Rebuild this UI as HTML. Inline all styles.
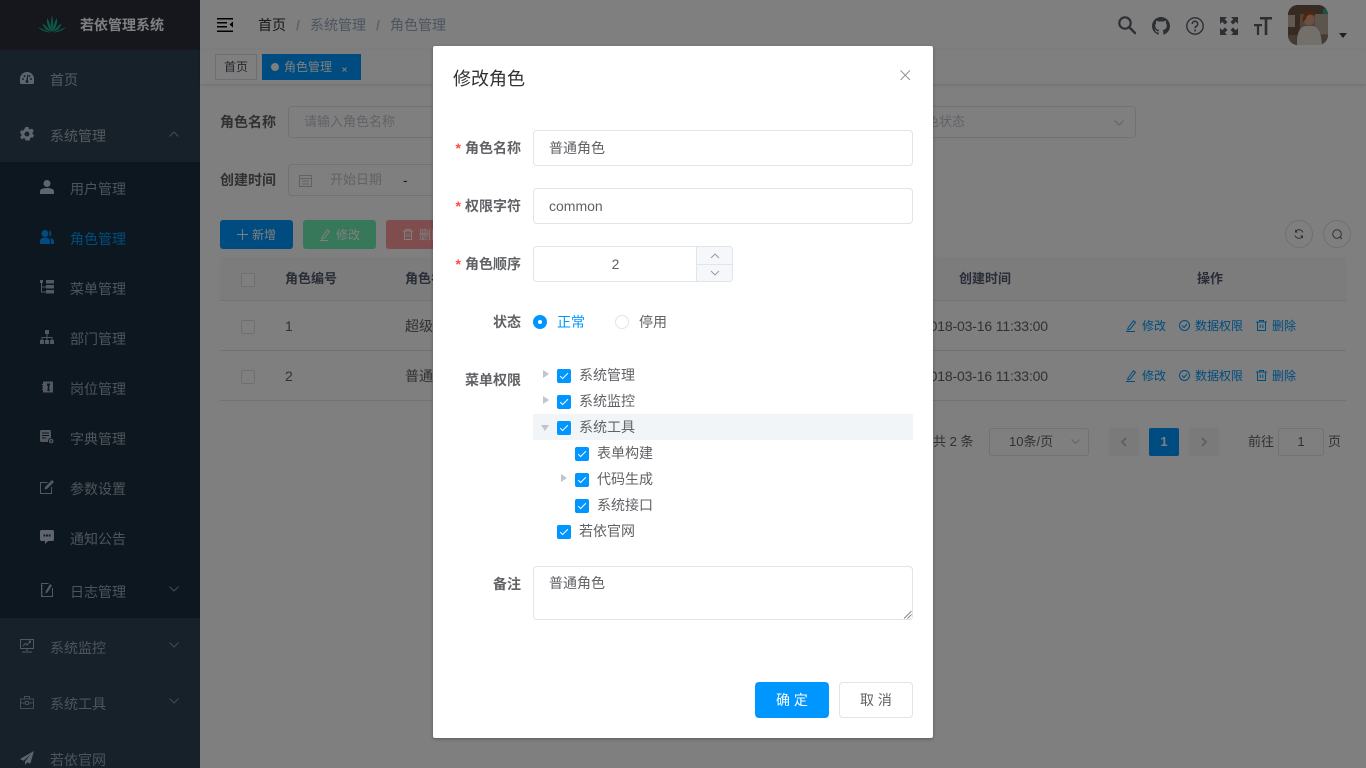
<!DOCTYPE html>
<html lang="zh"><head><meta charset="utf-8"><title>角色管理</title>
<style>
*{box-sizing:border-box}
html,body{margin:0;padding:0;width:1366px;height:768px;overflow:hidden;background:#fff}
body{font-family:"Liberation Sans","Noto Sans CJK SC",sans-serif;font-size:14px;color:#606266;position:relative}
.a{position:absolute}
.t{position:absolute;white-space:nowrap;line-height:20px;height:20px}
.b{font-weight:700}
.side{color:#aab4bf}
.sub{color:#9aa8b5}
.box{position:absolute;border:1px solid #dfe4ed;border-radius:4px;background:#fff}
.cb{position:absolute;width:14px;height:14px;border:1px solid #dcdfe6;border-radius:2px;background:#fff}
.ck{position:absolute;width:14px;height:14px;border-radius:2px;background:#0096ff}
.ck:after{content:"";position:absolute;left:4.5px;top:1.5px;width:3px;height:7px;border:1px solid #fff;border-left:0;border-top:0;transform:rotate(45deg)}
.car{position:absolute;width:0;height:0;border-left:6px solid #c0c4cc;border-top:4px solid transparent;border-bottom:4px solid transparent}
svg{position:absolute;overflow:visible}
.lb{position:absolute;right:845px;white-space:nowrap;font-weight:700;line-height:20px;height:20px;color:#606266}
.lb i{font-style:normal;color:#ff4949;margin-right:4px}
.op{font-size:12px;color:#0096ff}
.line{position:absolute;left:220px;width:1126px;height:1px;background:#dfe6ec}
.date{font-size:14px;letter-spacing:-.16px}
</style></head><body>

<!-- sidebar -->
<div class="a" style="left:0;top:0;width:200px;height:768px;background:#2d4354"></div>
<div class="a" style="left:0;top:0;width:200px;height:50px;background:#2b2f3a"></div>
<div class="a" style="left:0;top:162px;width:200px;height:456px;background:#1b2e3e"></div>
<svg style="left:38px;top:15px" width="28" height="18" viewBox="0 0 28 18"><g fill="#1ab394"><path d="M14 17C12.500 11 13 5 14 0c1 5 1.500 11 0 17z"/><path d="M13.500 17C10 13 8.500 8 9 3c2.500 4 4.500 9 4.500 14z"/><path d="M14.500 17C18 13 19.500 8 19 3c-2.500 4-4.500 9-4.500 14z"/><path d="M13 17C10 13 7 10 4.500 8.500c1 4 4 7 8.500 8.500z"/><path d="M15 17c3-4 6-7 8.500-8.500-1 4-4 7-8.500 8.500z"/><path d="M12.500 17.500C8 16 3 13 0 12.500c4 3 8 5 12.500 5z"/><path d="M15.500 17.500C20 16 25 13 28 12.500c-4 3-8 5-12.500 5z"/></g></svg>
<div class="t b" style="left:80px;top:15px;color:#fff">若依管理系统</div>

<svg style="left:20px;top:72px" width="14" height="13" viewBox="0 0 14 13"><path fill="#bfcbd9" fill-rule="evenodd" d="M7 0a7 7 0 0 1 7 7v3.500a1.500 1.500 0 0 1-1.500 1.500h-11A1.500 1.500 0 0 1 0 10.500V7a7 7 0 0 1 7-7zM3 6a1 1 0 1 0 0 2 1 1 0 0 0 0-2zm1.500-3a1 1 0 1 0 0 2 1 1 0 0 0 0-2zm5 0a1 1 0 1 0 0 2 1 1 0 0 0 0-2zM11 6a1 1 0 1 0 0 2 1 1 0 0 0 0-2zM7.300 2.500l-.9 5.600a1.500 1.500 0 1 0 1.500.1l.2-5.700z"/></svg>
<div class="t side" style="left:50px;top:70px">首页</div>

<svg style="left:20px;top:127px" width="14" height="14" viewBox="0 0 14 14"><path fill="#bfcbd9" fill-rule="evenodd" d="M5.500 0h3l.4 1.900 1.400.6L12 1.500 13.900 4l-1.400 1.400.1 1.600 1.400 1-1.100 2.700-1.900-.3-1.100 1.100.1 2H5.500l-.4-1.900-1.400-.6L2 12.500.1 10l1.400-1.400L1.400 7 0 6l1.100-2.700 1.900.3 1.100-1.100L5.500 0zM7 4.500a2.500 2.500 0 1 0 0 5 2.500 2.500 0 0 0 0-5z"/></svg>
<div class="t side" style="left:50px;top:126px">系统管理</div>
<svg style="left:169px;top:131px" width="10" height="6" viewBox="0 0 10 6"><path fill="none" stroke="#8a96a4" d="M.5 5.500 5 1l4.500 4.500"/></svg>

<svg style="left:40px;top:180px" width="14" height="14" viewBox="0 0 14 14"><circle cx="7" cy="3.500" r="3.500" fill="#bfcbd9"/><path fill="#bfcbd9" d="M0 14v-2.500C0 9 3 8 7 8s7 1 7 3.500V14z"/></svg>
<div class="t sub" style="left:70px;top:179px">用户管理</div>

<svg style="left:40px;top:230px" width="14" height="14" viewBox="0 0 14 14"><g fill="#0096ff"><circle cx="5" cy="3.500" r="3.500"/><path d="M0 14v-3c0-2 2-3.500 5-3.500s5 1.500 5 3.500v3z"/><path d="M9 .5a3.200 3.200 0 0 1 0 6.200c.8-1.800.8-4.400 0-6.200zM10 8c2.500.3 4 1.500 4 3.500V14h-3v-3c0-1.300-.4-2.200-1-3z"/></g></svg>
<div class="t" style="left:70px;top:229px;color:#0096ff">角色管理</div>

<svg style="left:40px;top:280px" width="14" height="14" viewBox="0 0 14 14"><g fill="#a5b1bd"><rect x="0" y="0" width="3" height="3"/><rect x="6" y="0" width="8" height="3.500"/><rect x="6" y="5" width="8" height="3.500"/><rect x="6" y="10" width="8" height="3.500"/></g><path fill="none" stroke="#a5b1bd" d="M1.500 3v9h4.500M1.500 7H6"/></svg>
<div class="t sub" style="left:70px;top:279px">菜单管理</div>

<svg style="left:40px;top:330px" width="14" height="14" viewBox="0 0 14 14"><g fill="#a5b1bd"><rect x="5" y="0" width="4" height="4"/><rect x="0" y="10" width="4" height="4"/><rect x="5" y="10" width="4" height="4"/><rect x="10" y="10" width="4" height="4"/></g><path fill="none" stroke="#a5b1bd" d="M7 4v6M2 10V7.500h10V10"/></svg>
<div class="t sub" style="left:70px;top:329px">部门管理</div>

<svg style="left:41px;top:380px" width="12" height="14" viewBox="0 0 12 14"><path fill="#a5b1bd" fill-rule="evenodd" d="M2 1.500h10V12.500H2V10H1V9h1V7.500H1v-1h1V5H1V4h1zM6 3.500v2l.8.5v3L6 10l1.500 1.500L9 10l-.7-1V6L9 5.500v-2z"/></svg>
<div class="t sub" style="left:70px;top:379px">岗位管理</div>

<svg style="left:40px;top:430px" width="14" height="14" viewBox="0 0 14 14"><path fill="#a5b1bd" fill-rule="evenodd" d="M0 1.500C0 .7.700 0 1.500 0h8C10.300 0 11 .7 11 1.500V8a3 3 0 0 0-2.900 4H1.500C.7 12 0 11.300 0 10.500zM2 2.500v1h7v-1zM2 5v1h7V5zM2 7.500v1h4v-1z"/><circle cx="11.200" cy="11" r="2.300" fill="#a5b1bd"/><circle cx="11.200" cy="11" r=".9" fill="#1b2e3e"/></svg>
<div class="t sub" style="left:70px;top:429px">字典管理</div>

<svg style="left:40px;top:480px" width="14" height="14" viewBox="0 0 14 14"><path fill="none" stroke="#a5b1bd" d="M11.500 7v6.500H.5V2.500h7"/><path fill="#a5b1bd" d="M12 0l2 2-7 7-2.500.5L5 7z"/></svg>
<div class="t sub" style="left:70px;top:479px">参数设置</div>

<svg style="left:40px;top:530px" width="14" height="14" viewBox="0 0 14 14"><path fill="#bfcbd9" fill-rule="evenodd" d="M1.500 0h11C13.300 0 14 .7 14 1.500v8c0 .8-.7 1.500-1.500 1.500H8l-3 3v-3H1.500C.7 11 0 10.300 0 9.500v-8C0 .7.700 0 1.500 0zM3.500 4.500v2h1.800v-2zM6.100 4.500v2h1.800v-2zM8.700 4.500v2h1.800v-2z"/></svg>
<div class="t sub" style="left:70px;top:529px">通知公告</div>

<svg style="left:41px;top:583px" width="12" height="14" viewBox="0 0 12 14"><path fill="none" stroke="#a5b1bd" d="M11.500 5v8.500H.5V.5h7M.5 3h1.500M.5 6h1.500M.5 9h1.500M.5 12h1.500"/><path fill="#a5b1bd" d="M9 1l2 1.500-4.500 7-2 1 .3-2.300z"/></svg>
<div class="t sub" style="left:70px;top:582px">日志管理</div>
<svg style="left:169px;top:586px" width="10" height="6" viewBox="0 0 10 6"><path fill="none" stroke="#8a96a4" d="M.5.5 5 5 9.500.5"/></svg>

<svg style="left:20px;top:639px" width="14" height="14" viewBox="0 0 14 14"><path fill="none" stroke="#a5b1bd" d="M.5.500h13v9H.5zM7 9.500V12M2 13h10M3 7l2.500-2.500L7 6l3.500-4M8.500 2H10.500V4"/></svg>
<div class="t sub" style="left:50px;top:638px">系统监控</div>
<svg style="left:169px;top:642px" width="10" height="6" viewBox="0 0 10 6"><path fill="none" stroke="#8a96a4" d="M.5.5 5 5 9.500.5"/></svg>

<svg style="left:20px;top:696px" width="14" height="13" viewBox="0 0 14 13"><path fill="none" stroke="#8a96a4" d="M.5 3h13v9.500H.5zM4.500 3V.5h5V3M.5 7h5M8.500 7h5M5.500 5.500h3v3h-3z"/></svg>
<div class="t sub" style="left:50px;top:694px">系统工具</div>
<svg style="left:169px;top:698px" width="10" height="6" viewBox="0 0 10 6"><path fill="none" stroke="#8a96a4" d="M.5.5 5 5 9.500.5"/></svg>

<svg style="left:20px;top:751px" width="14" height="14" viewBox="0 0 14 14"><path fill="#bfcbd9" d="M14 0 0 8l3.500 1.800L11 3 5 10.500V14l2.200-2.700 3 1.500z"/></svg>
<div class="t sub" style="left:50px;top:750px">若依官网</div>

<!-- header -->
<div class="a" style="left:200px;top:50px;width:1166px;height:1px;background:#ececec"></div>
<svg style="left:217px;top:18px" width="16" height="14" viewBox="0 0 16 14"><g fill="#000"><rect width="16" height="1.500"/><rect y="4" width="10" height="1.500"/><rect y="8" width="10" height="1.500"/><rect y="12.500" width="16" height="1.500"/><path d="M16 3.500v6l-3.500-3z"/></g></svg>
<div class="t" style="left:258px;top:15px;color:#303133">首页</div>
<div class="t b" style="left:296px;top:15px;color:#c0c4cc">/</div>
<div class="t" style="left:310px;top:15px;color:#97a8be">系统管理</div>
<div class="t b" style="left:376px;top:15px;color:#c0c4cc">/</div>
<div class="t" style="left:390px;top:15px;color:#97a8be">角色管理</div>

<svg style="left:1118px;top:16px" width="18" height="18" viewBox="0 0 18 18"><circle cx="7" cy="7" r="5.700" fill="none" stroke="#5a5e66" stroke-width="2.200"/><path d="M11.500 11.500 17 17" stroke="#5a5e66" stroke-width="2.400" stroke-linecap="round"/></svg>
<svg style="left:1152px;top:17px" width="18" height="18" viewBox="0 0 16 16"><path fill="#5a5e66" d="M8 0C3.580 0 0 3.580 0 8c0 3.540 2.290 6.530 5.470 7.590.4.070.55-.17.55-.38 0-.19-.01-.82-.01-1.490-2.010.37-2.530-.49-2.690-.94-.09-.23-.48-.94-.82-1.130-.28-.15-.68-.52-.01-.53.63-.01 1.080.58 1.230.82.720 1.210 1.870.87 2.330.66.070-.52.280-.87.510-1.070-1.780-.2-3.640-.89-3.640-3.950 0-.87.310-1.590.820-2.150-.08-.2-.36-1.020.08-2.120 0 0 .67-.21 2.200.82.640-.18 1.320-.27 2-.27s1.360.09 2 .27c1.530-1.040 2.200-.82 2.200-.82.440 1.100.160 1.920.08 2.120.51.560.82 1.270.82 2.150 0 3.070-1.870 3.750-3.650 3.950.29.250.54.730.54 1.480 0 1.070-.01 1.930-.01 2.200 0 .21.150.46.550.38A8.010 8.010 0 0 0 16 8c0-4.420-3.580-8-8-8z"/></svg>
<svg style="left:1186px;top:17px" width="18" height="18" viewBox="0 0 18 18"><circle cx="9" cy="9" r="8.200" fill="none" stroke="#5a5e66" stroke-width="1.400"/><path d="M6.300 7a2.700 2.700 0 1 1 4 2.300C9.400 9.800 9 10.300 9 11.300" fill="none" stroke="#5a5e66" stroke-width="1.500"/><circle cx="9" cy="13.500" r="1" fill="#5a5e66"/></svg>
<svg style="left:1220px;top:17px" width="18" height="18" viewBox="0 0 18 18"><g fill="#5a5e66"><path d="M0 0h7L4.800 2.200 7.500 5 5 7.500 2.200 4.800 0 7zM18 0v7l-2.200-2.200L13 7.500 10.500 5l2.700-2.800L11 0zM0 18v-7l2.200 2.200L5 10.500 7.500 13l-2.700 2.800L7 18zM18 18h-7l2.200-2.200-2.700-2.800 2.500-2.500 2.800 2.700L18 11z"/></g></svg>
<svg style="left:1254px;top:17px" width="18" height="18" viewBox="0 0 18 18"><g fill="#5a5e66"><path d="M6 0h12v2.500h-4.700V18h-2.600V2.500H6z"/><path d="M0 7h8v2.200H5.100V18H2.900V9.200H0z"/></g></svg>
<svg style="left:1288px;top:5px" width="40" height="40" viewBox="0 0 40 40"><defs><clipPath id="av"><rect width="40" height="40" rx="10"/></clipPath></defs><g clip-path="url(#av)"><rect width="40" height="40" fill="#a08672"/><rect width="40" height="9" fill="#6b5646"/><rect x="0" y="0" width="12" height="40" fill="#6e5444"/><rect x="0" y="10" width="7" height="12" fill="#c4b4a0"/><rect x="27" y="9" width="13" height="20" fill="#b7ab9a"/><rect x="35" y="4" width="5" height="5" fill="#2ea8a0"/><rect x="0" y="30" width="40" height="10" fill="#8a7666"/><path d="M9 40c0-10 1-17 8-19h8c7 2 8 9 9 19z" fill="#e6e1d8"/><circle cx="21" cy="15" r="5.500" fill="#d9a184"/><path d="M15 17c-1-8 3-12 8-11 3 .5 4 3 4 5-3-2-6-2-8 0-1 2-2 5-4 6z" fill="#a04a1c"/></g></svg>
<div class="a" style="left:1339px;top:33px;width:0;height:0;border-left:4px solid transparent;border-right:4px solid transparent;border-top:5px solid #304156"></div>

<!-- tags -->
<div class="a" style="left:200px;top:50px;width:1166px;height:34px;background:#fff;box-shadow:0 1px 3px 0 rgba(0,0,0,.12),0 0 3px 0 rgba(0,0,0,.04)"></div>
<div class="a" style="left:215px;top:54px;width:42px;height:26px;border:1px solid #d8dce5;background:#fff"></div>
<div class="t" style="left:224px;top:57px;font-size:12px;color:#495060">首页</div>
<div class="a" style="left:262px;top:54px;width:99px;height:26px;background:#0096ff"></div>
<div class="a" style="left:271px;top:63px;width:8px;height:8px;border-radius:50%;background:#fff"></div>
<div class="t" style="left:284px;top:57px;font-size:12px;color:#fff">角色管理</div>
<svg style="left:342px;top:67px" width="5" height="5" viewBox="0 0 5 5"><path d="M.5.5l4 4M4.500.5l-4 4" stroke="#fff" stroke-width=".9"/></svg>

<!-- search -->
<div class="t b" style="left:220px;top:112px">角色名称</div>
<div class="box" style="left:288px;top:106px;width:240px;height:32px"></div>
<div class="t" style="left:304px;top:112px;color:#c0c4cc;font-size:13px">请输入角色名称</div>
<div class="box" style="left:896px;top:106px;width:240px;height:32px"></div>
<div class="t" style="left:913px;top:112px;color:#c0c4cc;font-size:13px">角色状态</div>
<svg style="left:1114px;top:120px" width="10" height="6" viewBox="0 0 10 6"><path fill="none" stroke="#c0c4cc" d="M.5.5 5 5 9.500.5"/></svg>
<div class="t b" style="left:220px;top:170px">创建时间</div>
<div class="box" style="left:288px;top:164px;width:240px;height:32px"></div>
<svg style="left:299px;top:174px" width="13" height="13" viewBox="0 0 13 13"><path fill="none" stroke="#c0c4cc" d="M.5 1.500h12v11H.5zM.5 4.500h12M3 7h7M3 10h7"/></svg>
<div class="t" style="left:330px;top:170px;color:#c0c4cc;font-size:13px">开始日期</div>
<div class="t" style="left:403px;top:170px;color:#303133">-</div>

<!-- toolbar -->
<div class="a" style="left:220px;top:220px;width:73px;height:29px;background:#0096ff;border-radius:3px"></div>
<svg style="left:237px;top:229px" width="11" height="11" viewBox="0 0 11 11"><path d="M5.500 0v11M0 5.500h11" stroke="#fff"/></svg>
<div class="t" style="left:252px;top:225px;font-size:12px;color:#fff">新增</div>
<div class="a" style="left:303px;top:220px;width:73px;height:29px;background:#6ef0b4;border-radius:3px"></div>
<svg style="left:320px;top:229px" width="11" height="12" viewBox="0 0 11 12"><path fill="none" stroke="#fff" d="M2 8 7.500.8l2 1.500-5.500 7-2.300.5zM0 11.500h8"/></svg>
<div class="t" style="left:336px;top:225px;font-size:12px;color:#fff">修改</div>
<div class="a" style="left:386px;top:220px;width:73px;height:29px;background:#ff9a9a;border-radius:3px"></div>
<svg style="left:403px;top:229px" width="10" height="11" viewBox="0 0 10 11"><path fill="none" stroke="#fff" d="M0 2h10M3 2V.5h4V2M1.500 2v8.500h7V2M3.800 4.500v3.500M6.200 4.500v3.500"/></svg>
<div class="t" style="left:419px;top:225px;font-size:12px;color:#fff">删除</div>
<div class="a" style="left:1285px;top:220px;width:28px;height:28px;border:1px solid #dcdfe6;border-radius:50%"></div>
<svg style="left:1294px;top:229px" width="10" height="10" viewBox="0 0 10 10"><path fill="none" stroke="#606266" d="M9 3.500A4.300 4.300 0 0 0 1.500 2.500M1 6.500a4.300 4.300 0 0 0 7.500 1"/><path fill="#606266" d="M1 .5v3h3zM9 9.500v-3H6z"/></svg>
<div class="a" style="left:1323px;top:220px;width:28px;height:28px;border:1px solid #dcdfe6;border-radius:50%"></div>
<svg style="left:1332px;top:229px" width="11" height="11" viewBox="0 0 11 11"><circle cx="5" cy="5" r="4.300" fill="none" stroke="#606266"/><path d="M8 8l2 2" stroke="#606266"/></svg>

<!-- table -->
<div class="a" style="left:220px;top:257px;width:1126px;height:43px;background:#f8f8f9"></div>
<div class="line" style="top:300px"></div>
<div class="line" style="top:350px"></div>
<div class="line" style="top:400px"></div>
<div class="cb" style="left:241px;top:273px"></div>
<div class="cb" style="left:241px;top:320px"></div>
<div class="cb" style="left:241px;top:370px"></div>
<div class="t b" style="left:285px;top:269px;font-size:13px;color:#515a6e">角色编号</div>
<div class="t b" style="left:405px;top:269px;font-size:13px;color:#515a6e">角色名称</div>
<div class="t b" style="left:959px;top:269px;font-size:13px;color:#515a6e">创建时间</div>
<div class="t b" style="left:1197px;top:269px;font-size:13px;color:#515a6e">操作</div>
<div class="t" style="left:285px;top:316px">1</div>
<div class="t" style="left:285px;top:366px">2</div>
<div class="t" style="left:405px;top:316px">超级管理员</div>
<div class="t" style="left:405px;top:366px">普通角色</div>
<div class="t date" style="left:922px;top:316px">2018-03-16 11:33:00</div>
<div class="t date" style="left:922px;top:366px">2018-03-16 11:33:00</div>

<svg style="left:1126px;top:320px" width="11" height="12" viewBox="0 0 11 12"><path fill="none" stroke="#0096ff" d="M2 8 7.500.8l2 1.500-5.500 7-2.300.5zM0 11.500h9"/></svg>
<div class="t op" style="left:1142px;top:316px">修改</div>
<svg style="left:1179px;top:320px" width="11" height="11" viewBox="0 0 11 11"><circle cx="5.500" cy="5.500" r="5" fill="none" stroke="#0096ff"/><path d="M3 5.500l2 2 3-3.500" fill="none" stroke="#0096ff"/></svg>
<div class="t op" style="left:1195px;top:316px">数据权限</div>
<svg style="left:1256px;top:320px" width="11" height="11" viewBox="0 0 11 11"><path fill="none" stroke="#0096ff" d="M0 2h11M3.500 2V.5h4V2M1.500 2v8.500h8V2M4.200 4.500v3.500M6.800 4.500v3.500"/></svg>
<div class="t op" style="left:1272px;top:316px">删除</div>

<svg style="left:1126px;top:370px" width="11" height="12" viewBox="0 0 11 12"><path fill="none" stroke="#0096ff" d="M2 8 7.500.8l2 1.500-5.500 7-2.300.5zM0 11.500h9"/></svg>
<div class="t op" style="left:1142px;top:366px">修改</div>
<svg style="left:1179px;top:370px" width="11" height="11" viewBox="0 0 11 11"><circle cx="5.500" cy="5.500" r="5" fill="none" stroke="#0096ff"/><path d="M3 5.500l2 2 3-3.500" fill="none" stroke="#0096ff"/></svg>
<div class="t op" style="left:1195px;top:366px">数据权限</div>
<svg style="left:1256px;top:370px" width="11" height="11" viewBox="0 0 11 11"><path fill="none" stroke="#0096ff" d="M0 2h11M3.500 2V.5h4V2M1.500 2v8.500h8V2M4.200 4.500v3.500M6.800 4.500v3.500"/></svg>
<div class="t op" style="left:1272px;top:366px">删除</div>

<!-- pagination -->
<div class="t" style="left:933px;top:432px;font-size:13px">共 2 条</div>
<div class="box" style="left:989px;top:428px;width:100px;height:28px;border-radius:3px"></div>
<div class="t" style="left:1009px;top:432px;font-size:13px">10条/页</div>
<svg style="left:1071px;top:439px" width="9" height="5" viewBox="0 0 9 5"><path fill="none" stroke="#c0c4cc" d="M.5.5 4.500 4.500 8.500.5"/></svg>
<div class="a" style="left:1109px;top:428px;width:30px;height:28px;background:#f4f4f5;border-radius:2px"></div>
<svg style="left:1121px;top:437px" width="6" height="10" viewBox="0 0 6 10"><path fill="none" stroke="#c0c4cc" stroke-width="2" d="M5 1 1 5l4 4"/></svg>
<div class="a" style="left:1149px;top:428px;width:30px;height:28px;background:#0096ff;border-radius:2px"></div>
<div class="t b" style="left:1149px;top:432px;width:30px;text-align:center;font-size:13px;color:#fff">1</div>
<div class="a" style="left:1189px;top:428px;width:30px;height:28px;background:#f4f4f5;border-radius:2px"></div>
<svg style="left:1201px;top:437px" width="6" height="10" viewBox="0 0 6 10"><path fill="none" stroke="#c0c4cc" stroke-width="2" d="M1 1l4 4-4 4"/></svg>
<div class="t" style="left:1248px;top:432px;font-size:13px">前往</div>
<div class="box" style="left:1278px;top:428px;width:46px;height:28px;border-radius:3px"></div>
<div class="t" style="left:1278px;top:432px;width:46px;text-align:center;font-size:13px">1</div>
<div class="t" style="left:1328px;top:432px;font-size:13px">页</div>

<!-- overlay -->
<div class="a" style="left:0;top:0;width:1366px;height:768px;background:rgba(0,0,0,.5)"></div>

<!-- dialog -->
<div class="a" style="left:433px;top:46px;width:500px;height:692px;background:#fff;border-radius:2px;box-shadow:0 1px 3px rgba(0,0,0,.3)"></div>
<div class="t" style="left:453px;top:67px;font-size:18px;line-height:24px;height:24px;color:#303133">修改角色</div>
<svg style="left:900px;top:70px" width="10" height="10" viewBox="0 0 10 10"><path d="M.5.5l9.500 9.500M10 .5.500 10" stroke="#909399"/></svg>

<div class="lb" style="top:138px"><i>*</i>角色名称</div>
<div class="box" style="left:533px;top:130px;width:380px;height:36px"></div>
<div class="t" style="left:549px;top:138px">普通角色</div>

<div class="lb" style="top:196px"><i>*</i>权限字符</div>
<div class="box" style="left:533px;top:188px;width:380px;height:36px"></div>
<div class="t" style="left:549px;top:196px">common</div>

<div class="lb" style="top:254px"><i>*</i>角色顺序</div>
<div class="box" style="left:533px;top:246px;width:200px;height:36px"></div>
<div class="a" style="left:696px;top:247px;width:36px;height:34px;background:#f5f7fa;border-left:1px solid #dfe4ed;border-radius:0 3px 3px 0"></div>
<div class="a" style="left:697px;top:264px;width:35px;height:1px;background:#dfe4ed"></div>
<svg style="left:710px;top:253px" width="10" height="6" viewBox="0 0 10 6"><path fill="none" stroke="#909399" stroke-width=".9" d="M1 5l4-4 4 4"/></svg>
<svg style="left:710px;top:270px" width="10" height="6" viewBox="0 0 10 6"><path fill="none" stroke="#909399" stroke-width=".9" d="M1 1l4 4 4-4"/></svg>
<div class="t" style="left:534px;top:254px;width:163px;text-align:center">2</div>

<div class="lb" style="top:312px">状态</div>
<div class="a" style="left:533px;top:316px;width:14px;height:14px;border-radius:50%;background:#0096ff;margin-top:-1px"></div>
<div class="a" style="left:538px;top:320px;width:4px;height:4px;border-radius:50%;background:#fff"></div>
<div class="t" style="left:557px;top:312px;color:#0096ff">正常</div>
<div class="a" style="left:615px;top:315px;width:14px;height:14px;border-radius:50%;border:1px solid #dfe4ed"></div>
<div class="t" style="left:639px;top:312px">停用</div>

<div class="lb" style="top:370px">菜单权限</div>
<div class="a" style="left:533px;top:414px;width:380px;height:26px;background:#f2f5f8"></div>

<div class="car" style="left:543px;top:370px"></div>
<div class="ck" style="left:557px;top:369px"></div>
<div class="t" style="left:579px;top:365px">系统管理</div>
<div class="car" style="left:543px;top:396px"></div>
<div class="ck" style="left:557px;top:395px"></div>
<div class="t" style="left:579px;top:391px">系统监控</div>
<div class="a" style="left:541px;top:425px;width:0;height:0;border-top:6px solid #c0c4cc;border-left:4px solid transparent;border-right:4px solid transparent"></div>
<div class="ck" style="left:557px;top:421px"></div>
<div class="t" style="left:579px;top:417px">系统工具</div>
<div class="ck" style="left:575px;top:447px"></div>
<div class="t" style="left:597px;top:443px">表单构建</div>
<div class="car" style="left:561px;top:474px"></div>
<div class="ck" style="left:575px;top:473px"></div>
<div class="t" style="left:597px;top:469px">代码生成</div>
<div class="ck" style="left:575px;top:499px"></div>
<div class="t" style="left:597px;top:495px">系统接口</div>
<div class="ck" style="left:557px;top:525px"></div>
<div class="t" style="left:579px;top:521px">若依官网</div>

<div class="lb" style="top:574px">备注</div>
<div class="box" style="left:533px;top:566px;width:380px;height:54px"></div>
<div class="t" style="left:549px;top:573px">普通角色</div>
<svg style="left:903px;top:610px" width="9" height="9" viewBox="0 0 9 9"><path d="M1 8.500 8.500 1M4.500 8.500 8.500 4.500" stroke="#606266" stroke-width=".8"/></svg>

<div class="a" style="left:755px;top:682px;width:74px;height:36px;background:#0096ff;border-radius:4px"></div>
<div class="t" style="left:755px;top:690px;width:74px;text-align:center;color:#fff">确 定</div>
<div class="box" style="left:839px;top:682px;width:74px;height:36px"></div>
<div class="t" style="left:839px;top:690px;width:74px;text-align:center">取 消</div>

</body></html>
